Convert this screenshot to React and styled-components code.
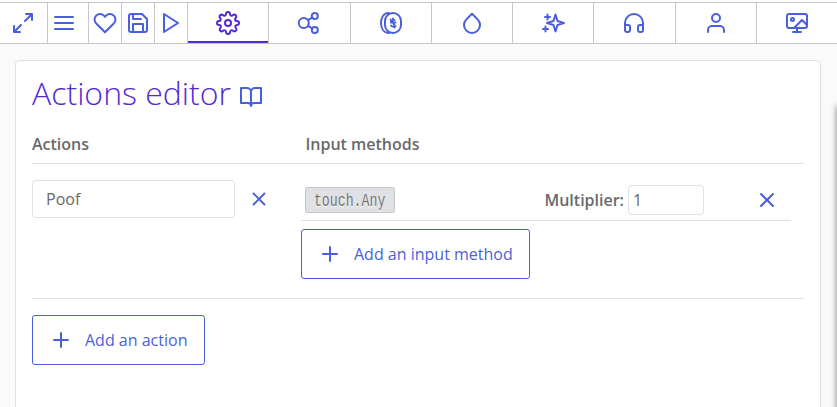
import React from "react";
import styled, { createGlobalStyle } from "styled-components";

const act = "#4a5fdb";
const line = "#c5c9cc";
const soft = "#dfe1e5";

const GlobalStyle = createGlobalStyle`
  * { box-sizing: border-box; }
  html, body { margin: 0; height: 100%; overflow: hidden; background: #fafafa; }
  body { font-family: "Open Sans", "Noto Sans", sans-serif; font-size: 16px; line-height: 24px; color: #696969; }
  button, input { font: inherit; color: inherit; }
`;

const Page = styled.div`
  position: relative;
  height: 407px;
  overflow: hidden;
  display: flex;
  flex-direction: column;
`;

const Toolbar = styled.nav`
  display: flex;
  flex: none;
  height: 44px;
  padding-top: 2px;
  background: #fff;
`;

const Tool = styled.button`
  flex: none;
  width: ${(p) => p.$width}px;
  padding: 0 0 0 ${(p) => p.$pad}px;
  display: flex;
  align-items: center;
  border: solid ${line};
  border-width: 1px 0 1px ${(p) => (p.$first ? 0 : 1)}px;
  background: none;
  color: ${act};
`;

const Tabs = styled.div`
  display: flex;
  flex: 1;
`;

const Tab = styled.button`
  flex: 1 1 0;
  padding: 0;
  display: flex;
  align-items: center;
  justify-content: center;
  border: solid ${line};
  border-width: 1px 0 1px 1px;
  background: none;
  color: ${(p) => (p.$active ? "#5529d6" : act)};
  box-shadow: ${(p) => (p.$active ? "inset 0 -2px #5529d6" : "none")};
`;

const Svg = styled.svg`
  display: block;
  flex: none;
  width: ${(p) => p.$size}px;
  height: ${(p) => p.$size}px;
  fill: none;
  stroke: currentColor;
  stroke-width: 2;
  stroke-linecap: round;
  stroke-linejoin: round;
`;

const Panel = styled.main`
  flex: none;
  width: 806px;
  height: 400px;
  margin: 16px 0 0 15px;
  padding: 16px;
  border: 1px solid ${soft};
  border-radius: 4px;
  background: #fff;
`;

const Title = styled.h1`
  display: flex;
  align-items: center;
  gap: 8px;
  height: 35px;
  margin: 0;
  padding-bottom: 4px;
  font-size: 32px;
  font-weight: 300;
  line-height: 31px;
  color: #5529d6;
`;

const DocsLink = styled.a`
  color: ${act};
  padding-top: 8px;
`;

const HeaderRow = styled.div`
  display: grid;
  grid-template-columns: 273.4px 1fr;
  height: 52px;
  padding-top: 20px;
  border-bottom: 1px solid ${soft};
  font-weight: 600;
`;

const ActionRow = styled.section`
  display: grid;
  grid-template-columns: 269px 490px;
  height: 135px;
  padding-top: 16px;
  border-bottom: 1px solid ${soft};
`;

const ActionName = styled.div`
  display: flex;
  align-items: center;
  height: 38px;
  gap: 13px;
`;

const Field = styled.input`
  width: ${(p) => p.$width}px;
  height: ${(p) => p.$height}px;
  padding: 0 ${(p) => p.$pad}px;
  border: 1px solid ${soft};
  border-radius: 4px;
  background: #fff;
  outline: 0;
`;

const IconButton = styled.button`
  display: flex;
  padding: 0;
  border: 0;
  background: none;
  color: ${act};
`;

const Method = styled.div`
  display: flex;
  align-items: center;
  height: 41px;
  padding: 0 12px 0 4px;
  border-bottom: 1px solid ${soft};
`;

const Code = styled.code`
  display: flex;
  justify-content: center;
  width: 90px;
  height: 26px;
  border: 1px solid ${line};
  border-radius: 2px;
  background: #dfe1e5;
  color: #737373;
  font: 18px/26px "Liberation Mono", monospace;
  text-shadow: 0 1px #fff;
`;

const Narrow = styled.span`
  transform: scaleX(0.735);
  white-space: nowrap;
`;

const Multiplier = styled.label`
  display: flex;
  align-items: center;
  gap: 4px;
  margin: 0 51px 0 auto;
  font-weight: 600;

  input { font-weight: 400; }
`;

const AddButton = styled.button`
  display: flex;
  align-items: center;
  gap: 12px;
  width: ${(p) => p.$width}px;
  height: 50px;
  margin-top: ${(p) => p.$top}px;
  padding: 0 0 0 16px;
  border: 1px solid ${act};
  border-radius: 3px;
  background: #fff;
  color: ${act};
`;

const EdgeShadow = styled.div`
  position: absolute;
  left: 837px;
  top: 106px;
  width: 20px;
  height: 400px;
  box-shadow: 0 0 6px rgba(0, 0, 0, 0.5);
`;

const paths = {
  expand: <path d="M15 3h6v6M9 21H3v-6M21 3l-7 7M3 21l7-7" />,
  menu: <path d="M3 12h18M3 6h18M3 18h18" />,
  heart: <path d="M20.84 4.61a5.5 5.5 0 0 0-7.78 0L12 5.67l-1.06-1.06a5.5 5.5 0 0 0-7.78 7.78l1.06 1.06L12 21.23l7.78-7.78 1.06-1.06a5.5 5.5 0 0 0 0-7.78z" />,
  save: <path d="M19 21H5a2 2 0 0 1-2-2V5a2 2 0 0 1 2-2h11l5 5v11a2 2 0 0 1-2 2zM17 21v-8H7v8M7 3v5h8" />,
  play: <path d="M5 3l14 9-14 9z" />,
  gear: (
    <>
      <circle cx="12" cy="12" r="3" />
      <path d="M19.4 15a1.65 1.65 0 0 0 .33 1.82l.06.06a2 2 0 1 1-2.83 2.83l-.06-.06a1.65 1.65 0 0 0-2.8 1.17V21a2 2 0 0 1-4 0v-.09A1.65 1.65 0 0 0 9 19.4a1.65 1.65 0 0 0-1.82.33l-.06.06a2 2 0 1 1-2.83-2.83l.06-.06A1.65 1.65 0 0 0 3.09 14H3a2 2 0 0 1 0-4h.09A1.65 1.65 0 0 0 4.6 9a1.65 1.65 0 0 0-.33-1.82l-.06-.06a2 2 0 1 1 2.83-2.83l.06.06A1.65 1.65 0 0 0 9 4.6a1.65 1.65 0 0 0 1-1.51V3a2 2 0 0 1 4 0v.09a1.65 1.65 0 0 0 2.82 1.17l.06-.06a2 2 0 1 1 2.83 2.83l-.06.06A1.65 1.65 0 0 0 20.91 10H21a2 2 0 0 1 0 4h-.09A1.65 1.65 0 0 0 19.4 15z" />
    </>
  ),
  behaviors: (
    <>
      <circle cx="6.8" cy="12" r="5" />
      <circle cx="17.8" cy="5" r="3" />
      <circle cx="17.8" cy="19" r="3" />
      <path d="M11 9.2L15.2 6.6M11 14.8l4.2 2.6" />
    </>
  ),
  coin: (
    <>
      <rect x="6" y="2" width="16" height="20" rx="8" />
      <path d="M10 2C5 2 2 6 2 12s3 10 8 10" />
      <path strokeWidth="1.8" d="M15.5 9.2h-2.2a1.7 1.7 0 0 0-1.2 2.6M12 14.5a2 2 0 0 0 2 1h1M11.5 8.5l5 7M16.5 11.5h-2.5M14 7.5v2M15.5 15v1.5" />
    </>
  ),
  droplet: <path d="M12 2.69l5.66 5.66a8 8 0 1 1-11.31 0z" />,
  sparkles: <path d="M14.5 3.5l2 6.5 6.5 2-6.5 2-2 6.5-2-6.5L6 12l6.500-2zM6.500 3.500v5M4 6h5M4.500 15.500v5M2 18h5" />,
  headphones: <path d="M3 18v-6a9 9 0 0 1 18 0v6M21 19a2 2 0 0 1-2 2h-1a2 2 0 0 1-2-2v-3a2 2 0 0 1 2-2h3zM3 19a2 2 0 0 0 2 2h1a2 2 0 0 0 2-2v-3a2 2 0 0 0-2-2H3z" />,
  user: (
    <>
      <path d="M20 21v-2a4 4 0 0 0-4-4H8a4 4 0 0 0-4 4v2" />
      <circle cx="12" cy="7" r="4" />
    </>
  ),
  room: (
    <>
      <rect x="2" y="3" width="20" height="14" rx="2" />
      <circle cx="7.5" cy="8.5" r="1.5" />
      <path d="M8 21h8M12 17v4M9 17l8-8 5 5" />
    </>
  ),
  book: <path d="M2 3h6a4 4 0 0 1 4 4v14a3 3 0 0 0-3-3H2zM22 3h-6a4 4 0 0 0-4 4v14a3 3 0 0 1 3-3h7z" />,
  close: <path d="M18 6L6 18M6 6l12 12" />,
  plus: <path d="M12 5v14M5 12h14" />,
};

const Icon = ({ name, size = 24 }) => (
  <Svg $size={size} viewBox="0 0 24 24">{paths[name]}</Svg>
);

const tools = [
  { name: "expand", width: 47, pad: 11 },
  { name: "menu", width: 41, pad: 4 },
  { name: "heart", width: 33, pad: 4 },
  { name: "save", width: 33, pad: 4 },
  { name: "play", width: 33, pad: 4 },
];
const tabs = ["gear", "behaviors", "coin", "droplet", "sparkles", "headphones", "user", "room"];

export default function App() {
  return (
    <Page>
      <GlobalStyle />
      <Toolbar>
        {tools.map((t, i) => (
          <Tool key={t.name} $width={t.width} $pad={t.pad} $first={i === 0}>
            <Icon name={t.name} />
          </Tool>
        ))}
        <Tabs>
          {tabs.map((name, i) => (
            <Tab key={name} $active={i === 0}><Icon name={name} /></Tab>
          ))}
        </Tabs>
      </Toolbar>
      <Panel>
        <Title>
          Actions editor
          <DocsLink><Icon name="book" /></DocsLink>
        </Title>
        <HeaderRow>
          <span>Actions</span>
          <span>Input methods</span>
        </HeaderRow>
        <ActionRow>
          <ActionName>
            <Field defaultValue="Poof" $width={203} $height={38} $pad={13} />
            <IconButton><Icon name="close" size={22} /></IconButton>
          </ActionName>
          <div>
            <Method>
              <Code><Narrow>touch.Any</Narrow></Code>
              <Multiplier>
                Multiplier:
                <Field defaultValue="1" $width={76} $height={30} $pad={4} />
              </Multiplier>
              <IconButton><Icon name="close" /></IconButton>
            </Method>
            <AddButton $width={229} $top={8}><Icon name="plus" />Add an input method</AddButton>
          </div>
        </ActionRow>
        <AddButton $width={173} $top={16}><Icon name="plus" />Add an action</AddButton>
      </Panel>
      <EdgeShadow />
    </Page>
  );
}
